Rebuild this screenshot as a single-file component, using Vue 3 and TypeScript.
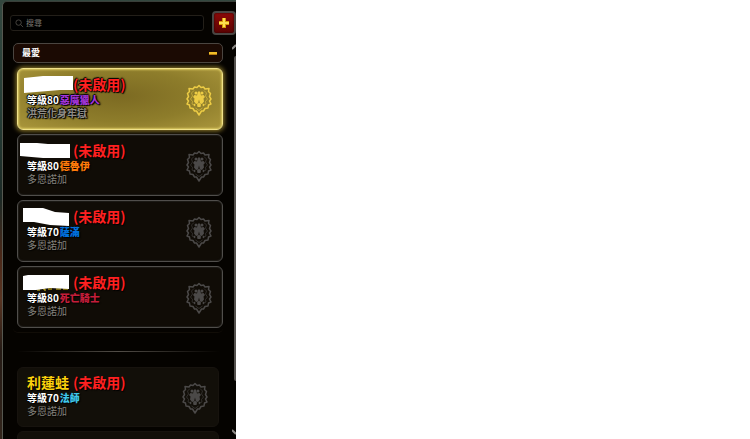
<script setup lang="ts">
import { ref } from 'vue'

interface Character {
  id: number
  name: string
  mask?: string
  traces?: string
  level: number
  job: string
  color: string
  place: string
}

const status = '(未啟用)'
const query = ref('')
const open = ref(true)
const selected = ref(1)

const favorites: Character[] = [
  { id: 1, name: '', mask: '4,9 23,7 53,7 53,21 40,21 4,24', level: 80, job: '惡魔獵人', color: '#a335d8', place: '洪荒化身牢獄' },
  { id: 2, name: '', mask: '0,8 17,8 28,9 50,9 50,23 23,23 0,21', level: 80, job: '德魯伊', color: '#ff7c0a', place: '多恩諾加' },
  { id: 3, name: '', mask: '3,7 23,7 35,11 49,12 49,25 30,24 14,21 3,21', level: 70, job: '薩滿', color: '#0070dd', place: '多恩諾加' },
  { id: 4, name: '', mask: '3,9 8,8 49,8 49,22 30,21 16,23 3,23', traces: 'M17 23h3M23 22h2v2M28 22h4M36 22h5M43 22h5', level: 80, job: '死亡騎士', color: '#c41e3a', place: '多恩諾加' },
]

const others: Character[] = [
  { id: 5, name: '利蓮蛙', level: 70, job: '法師', color: '#3fc7eb', place: '多恩諾加' },
]
</script>

<template>
  <main class="screen">
    <aside class="panel">
      <svg class="defs" aria-hidden="true">
        <symbol id="crest" viewBox="0 0 52 64">
          <g fill="none" stroke="currentColor" stroke-linejoin="round">
            <path stroke-width="3" d="M26 3l-4 4-5-1-3 4-8-1 1 6-4 4 2 6-3 5 3 4-3 6 5 2 1 6 6 1 3 5 4 0 5 8 5-8 4 0 3-5 6-1 1-6 5-2-3-6 3-4-3-5 2-6-4-4 1-6-8 1-3-4-5 1z" />
            <path stroke-width="2" opacity=".55" d="M16 13l-5 5 2 6-4 6 4 5-1 5 6 3M36 13l5 5-2 6 4 6-4 5 1 5-6 3M19 48l7 5 7-5" />
          </g>
          <g fill="currentColor">
            <circle cx="20" cy="18" r="3" />
            <circle cx="32" cy="18" r="3" />
            <path d="M24 15h4l2 8 5-1 3 4-3 3 1 6-4 5-4-1-2-8-2 8-4 1-4-5 1-6-3-3 3-4 5 1z" />
            <path d="M22 41l4-4 4 4-1 5h-6zM16 39l3 2-1 4-3-3zM36 39l-3 2 1 4 3-3z" />
          </g>
        </symbol>
      </svg>

      <header class="toolbar">
        <label class="search">
          <svg viewBox="0 0 10 10" aria-hidden="true"><circle cx="4" cy="4" r="3" /><path d="M6 6l3 3" /></svg>
          <input v-model="query" type="search" placeholder="搜尋" aria-label="搜尋" />
        </label>
        <button class="add" type="button" aria-label="新增">
          <svg viewBox="0 0 12 12" aria-hidden="true">
            <path fill="#d99a0b" d="M4 1h4v3h3v4H8v3H4V8H1V4h3z" />
            <path fill="#ffdf50" d="M5 1h2v4h4v2H7v3H5V7H1V5h4z" />
          </svg>
        </button>
      </header>

      <div class="scroll">
        <div class="lists">
          <section class="favorites">
            <button class="group" type="button" :aria-expanded="open" @click="open = !open">
              <span>最愛</span><i class="minus"></i>
            </button>
            <ul v-show="open" class="cards">
              <li v-for="c in favorites" :key="c.id">
                <button class="card" type="button" :class="{ active: c.id === selected }" @click="selected = c.id">
                  <span class="info">
                    <span class="title"><span class="name">{{ c.name }}</span><span class="status">{{ status }}</span></span>
                    <span class="level">等級{{ c.level }}<b :style="{ color: c.color }">{{ c.job }}</b></span>
                    <span class="place">{{ c.place }}</span>
                  </span>
                  <svg class="crest" aria-hidden="true"><use href="#crest" /></svg>
                  <svg class="mask" viewBox="0 0 56 28" aria-hidden="true">
                    <path v-if="c.traces" :d="c.traces" fill="none" stroke="#e6c91c" />
                    <polygon :points="c.mask" fill="#fff" />
                  </svg>
                </button>
              </li>
            </ul>
          </section>
          <hr class="divider" />
          <ul class="cards rest">
            <li v-for="c in others" :key="c.id">
              <button class="card plain" type="button" @click="selected = c.id">
                <span class="info">
                  <span class="title"><span class="name">{{ c.name }}</span><span class="status">{{ status }}</span></span>
                  <span class="level">等級{{ c.level }}<b :style="{ color: c.color }">{{ c.job }}</b></span>
                  <span class="place">{{ c.place }}</span>
                </span>
                <svg class="crest" aria-hidden="true"><use href="#crest" /></svg>
              </button>
            </li>
            <li class="card plain"></li>
          </ul>
        </div>
        <div class="track" aria-hidden="true">
          <svg viewBox="0 0 4 6"><path d="M0 5l4-4" /></svg>
          <i class="thumb"></i>
          <svg viewBox="0 0 4 6"><path d="M0 1l4 4" /></svg>
        </div>
      </div>
    </aside>
  </main>
</template>

<style>
body {
  margin: 0;
  background: #fff;
}
</style>

<style scoped>
* {
  box-sizing: border-box;
}
.screen {
  display: grid;
  grid-template-columns: clamp(236px, 31%, 340px) 1fr;
  height: 100vh;
  overflow: hidden;
  font-family: "Noto Sans CJK TC", "Noto Sans", sans-serif;
}
button {
  font: inherit;
  color: inherit;
  cursor: pointer;
}
ul {
  list-style: none;
  margin: 0;
  padding: 0;
}
.defs {
  position: absolute;
  width: 0;
  height: 0;
}
.panel {
  display: flex;
  flex-direction: column;
  min-height: 0;
  overflow: hidden;
  padding: 1px 0 0 2px;
  background: linear-gradient(#34483f, #263d36 25%, #1c2a26 45%, #4a2818 58%, #5a3522 68%, #251b15 80%, #33261c);
}
.toolbar {
  display: flex;
  align-items: center;
  gap: 8px;
  padding: 9px 0 0 7px;
  background: #050300;
  border-top: 1px solid #3a3f39;
  border-left: 1px solid #55574f;
  border-top-left-radius: 5px;
}
.search {
  flex: 1;
  min-width: 0;
  display: flex;
  align-items: center;
  gap: 2px;
  height: 16px;
  padding: 0 4px;
  border: 1px solid #231f19;
  border-radius: 3px;
  background: #000;
}
.search svg {
  flex: none;
  width: 9px;
  height: 9px;
  fill: none;
  stroke: #4c4944;
}
.search input {
  flex: 1;
  min-width: 0;
  height: 14px;
  padding: 0;
  border: 0;
  outline: 0;
  background: none;
  color: #ccc;
  font: 8px/14px "Noto Sans CJK TC", sans-serif;
}
.search input::placeholder {
  color: #7a7771;
  opacity: 1;
}
.add {
  flex: none;
  display: grid;
  place-items: center;
  width: 24px;
  height: 24px;
  padding: 0;
  border: 2px solid #494542;
  border-radius: 4px;
  background: linear-gradient(#8b0908, #5c0202);
  box-shadow: inset 0 0 2px #1b0000;
}
.add svg {
  width: 12px;
  height: 12px;
}
.scroll {
  flex: 1;
  min-height: 0;
  display: flex;
  background: #050300;
  border-left: 1px solid #55574f;
}
.lists {
  flex: 1;
  min-width: 0;
  padding: 8px 10px 0;
  overflow: hidden;
}
.favorites {
  padding-bottom: 4px;
  border-bottom: 1px solid #110d07;
  border-radius: 5px;
}
.group {
  display: flex;
  align-items: center;
  justify-content: space-between;
  width: 100%;
  height: 20px;
  padding: 0 5px 0 8px;
  border: 1px solid #4a4540;
  border-radius: 5px;
  background: #1b0a03;
  color: #fff;
  font-size: 9px;
  font-weight: 700;
  line-height: 18px;
}
.minus {
  width: 8px;
  height: 3px;
  background: #efbd28;
  border-bottom: 1px solid #b77b12;
}
.cards {
  display: flex;
  flex-direction: column;
  gap: 4px;
  padding: 5px 0 0 4px;
}
.card {
  position: relative;
  display: flex;
  align-items: center;
  justify-content: space-between;
  width: 100%;
  height: 62px;
  padding: 0 10px 0 9px;
  border: 1px solid #504e4b;
  border-radius: 6px;
  background: #100c06;
  box-shadow: inset 0 0 1px 1px #1d1b17;
  text-align: left;
}
.cards li {
  min-width: 0;
}
.active {
  border-color: #f0e28a;
  background: radial-gradient(ellipse at 50% 45%, #7c6a22, #8e7d2b 55%, #ab973c);
  box-shadow: 0 0 5px 1px #9b852e, inset 0 0 2px 1px #d8c660;
}
.info {
  display: flex;
  flex-direction: column;
  margin-bottom: 4px;
  font-size: 10px;
  line-height: 13px;
  text-shadow: 1px 1px 1px #000;
  white-space: nowrap;
}
.active .info {
  text-shadow: 1px 1px 1px #000, -1px 0 1px #000, 0 -1px 1px #000, 1px 0 2px #000;
}
.title {
  display: flex;
  gap: 4px;
  font-size: 14px;
  font-weight: 700;
  line-height: 18px;
}
.name {
  min-width: 42px;
  color: #fdd20c;
}
.status {
  color: #ff2020;
}
.level {
  display: flex;
  gap: 1px;
  color: #fff;
  font-weight: 700;
}
.place {
  color: #85827d;
}
.active .place {
  color: #8f8c86;
  font-weight: 700;
}
.crest {
  flex: none;
  width: 26px;
  height: 32px;
  margin-top: 2px;
  color: #4b4948;
}
.active .crest {
  color: #edcc45;
}
.mask {
  position: absolute;
  top: 0;
  left: 2px;
  width: 56px;
  height: 28px;
}
.divider {
  height: 1px;
  margin: 18px 4px 10px;
  border: 0;
  background: linear-gradient(90deg, transparent, #514d47 50%, transparent);
}
.rest {
  padding-right: 4px;
}
.plain {
  height: 60px;
  border-color: #17130e;
  background: #120f09;
  box-shadow: none;
}
.track {
  flex: none;
  display: flex;
  flex-direction: column;
  align-items: flex-end;
  gap: 6px;
  width: 3px;
  padding: 9px 0 4px;
}
.track svg {
  flex: none;
  width: 4px;
  height: 6px;
  fill: none;
  stroke: #8d8a86;
  stroke-width: 2;
}
.thumb {
  flex: 0 1 83%;
  width: 2px;
  border-radius: 2px 0 0 2px;
  background: #55524f;
}
.track svg:last-child {
  margin-top: auto;
}
</style>
